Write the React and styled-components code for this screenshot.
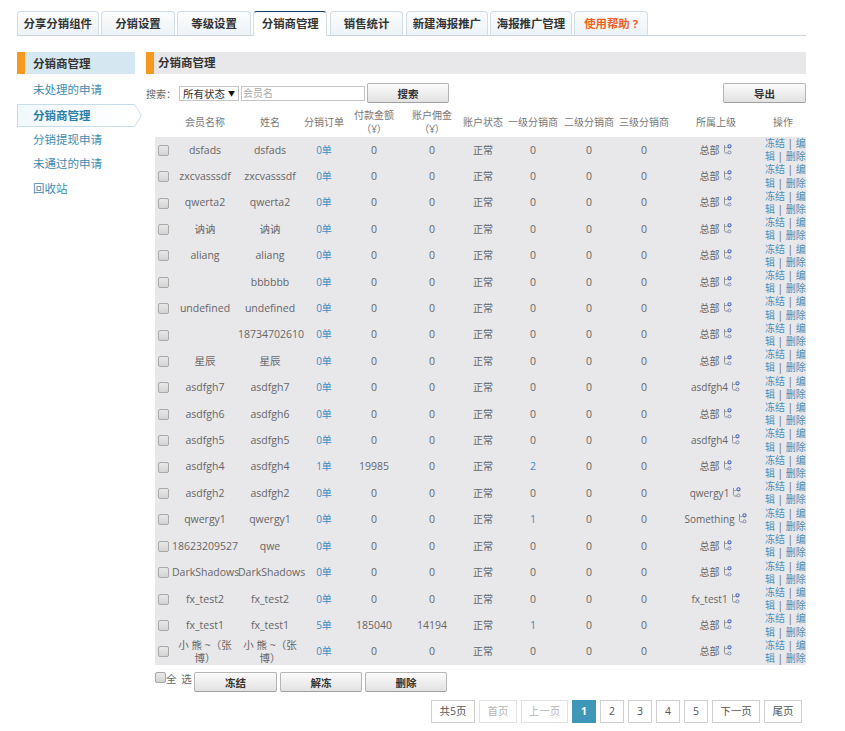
import styled, { createGlobalStyle } from 'styled-components';

const FONT = '"Open Sans", "Noto Sans CJK SC", sans-serif';

const tabs = ['分享分销组件', '分销设置', '等级设置', '分销商管理', '销售统计', '新建海报推广', '海报推广管理', '使用帮助 ?'];
const tabWidths = [81.5, 73.3, 73.3, 73.5, 73.5, 81.5, 81.2, 73.5];
const sideLinks = ['未处理的申请', '分销商管理', '分销提现申请', '未通过的申请', '回收站'];
const columns = ['会员名称', '姓名', '分销订单', '付款金额（¥）', '账户佣金（¥）', '账户状态', '一级分销商', '二级分销商', '三级分销商', '所属上级', '操作'];
const colWidths = [17, 66, 64, 44, 56, 60, 42, 58, 54, 56, 88, 46];

const rows = [
  ['dsfads', 'dsfads'],
  ['zxcvasssdf', 'zxcvasssdf'],
  ['qwerta2', 'qwerta2'],
  ['讷讷', '讷讷'],
  ['aliang', 'aliang'],
  ['', 'bbbbbb'],
  ['undefined', 'undefined'],
  ['', '18734702610'],
  ['星辰', '星辰'],
  ['asdfgh7', 'asdfgh7', { parent: 'asdfgh4' }],
  ['asdfgh6', 'asdfgh6'],
  ['asdfgh5', 'asdfgh5', { parent: 'asdfgh4' }],
  ['asdfgh4', 'asdfgh4', { orders: 1, paid: 19985, level1: 2 }],
  ['asdfgh2', 'asdfgh2', { parent: 'qwergy1' }],
  ['qwergy1', 'qwergy1', { parent: 'Something', level1: 1 }],
  ['18623209527', 'qwe'],
  ['DarkShadows', 'DarkShadows'],
  ['fx_test2', 'fx_test2', { parent: 'fx_test1' }],
  ['fx_test1', 'fx_test1', { orders: 5, paid: 185040, commission: 14194, level1: 1 }],
  ['小 熊 ~（张博）', '小 熊 ~（张博）'],
];

const pages = ['1', '2', '3', '4', '5'];

const GlobalStyle = createGlobalStyle`
  html, body {
    margin: 0;
    background: #fff;
    font-family: ${FONT};
    font-size: 10px;
    color: #666;
  }
`;

const Page = styled.div`
  width: 789px;
  padding: 11px 0 0 17px;
`;

const TabBar = styled.div`
  display: flex;
  gap: 2.8px;
  height: 24px;
  border-bottom: 1px solid #c9d5de;
`;

const Tab = styled.div`
  box-sizing: border-box;
  flex: none;
  height: ${(p) => (p.$active ? 25 : 24)}px;
  line-height: 23px;
  text-align: center;
  font-size: 11.4px;
  font-weight: 700;
  white-space: nowrap;
  color: ${(p) => (p.$help ? '#f0621e' : '#333')};
  background: ${(p) => (p.$active ? '#fff' : 'linear-gradient(#fbfcfd, #edf3f8)')};
  border: 1px solid #d2dde6;
  border-top-color: ${(p) => (p.$active ? '#1d3f5f' : '#d2dde6')};
  border-bottom: none;
  border-radius: 4px 4px 0 0;
`;

const Body = styled.div`
  display: flex;
  margin-top: 16px;
`;

const Sidebar = styled.aside`
  flex: none;
  width: 118px;
  margin-right: 11px;
`;

const SideHead = styled.div`
  height: 22px;
  line-height: 23px;
  padding-left: 8px;
  font-size: 11.5px;
  font-weight: 700;
  color: #333;
  background: #d5e7f0;
  border-left: 8px solid #f7981f;
`;

const SideList = styled.div`
  display: flex;
  flex-direction: column;
  margin-top: 4px;
`;

const SideLink = styled.div`
  position: relative;
  box-sizing: border-box;
  height: 24.7px;
  line-height: 24px;
  padding-left: 16px;
  font-size: 11.5px;
  color: ${(p) => (p.$active ? '#2a7fa6' : '#3f8bb0')};
  font-weight: ${(p) => (p.$active ? 700 : 400)};
  ${(p) =>
    p.$active &&
    `
    height: 23px;
    margin: 1px 0;
    padding-left: 15px;
    line-height: 22px;
    background: linear-gradient(90deg, #f1f8fc, #fff);
    border: 1px solid #c7dde9;
    border-right: none;
    &::after {
      content: '';
      position: absolute;
      right: -8px;
      top: 2px;
      width: 16px;
      height: 16px;
      background: #fff;
      border-top: 1px solid #c7dde9;
      border-right: 1px solid #c7dde9;
      transform: scaleX(0.6) rotate(45deg);
    }
  `}
`;

const Main = styled.main`
  flex: none;
  width: 660px;
`;

const MainHead = styled.div`
  height: 22px;
  line-height: 22px;
  padding-left: 4px;
  font-size: 11.5px;
  font-weight: 700;
  color: #333;
  background: #e8e7ea;
  border-left: 8px solid #f7981f;
`;

const SearchBar = styled.div`
  display: flex;
  align-items: center;
  height: 20px;
  margin-top: 9px;
`;

const SearchLabel = styled.span`
  width: 33px;
  flex: none;
  font-size: 10px;
  color: #666;
`;

const StatusSelect = styled.div`
  box-sizing: border-box;
  display: flex;
  justify-content: space-between;
  align-items: center;
  width: 60px;
  height: 15px;
  padding: 0 3px;
  font-size: 10.5px;
  color: #333;
  border: 1px solid #c4c4c4;
`;

const SelectArrow = styled.span`
  font-size: 7px;
  color: #111;
`;

const NameInput = styled.input`
  box-sizing: border-box;
  width: 124px;
  height: 15px;
  margin-left: 2px;
  padding: 0 1px;
  font-family: ${FONT};
  font-size: 10px;
  border: 1px solid #c4c4c4;
  outline: none;
  &::placeholder {
    color: #aaa;
  }
`;

const Button = styled.button`
  box-sizing: border-box;
  width: ${(p) => p.$w || 82}px;
  height: 20px;
  padding: 0;
  margin-left: ${(p) => p.$ml || 0}px;
  font-family: ${FONT};
  font-size: 10.5px;
  font-weight: 600;
  color: #333;
  background: linear-gradient(#fbfbfb, #e2e2e2);
  border: 1px solid #b5b5b5;
  border-bottom-color: #9f9f9f;
  border-radius: 2px;
`;

const Spacer = styled.div`
  flex: 1;
`;

const Table = styled.table`
  width: 651px;
  margin: 5px 0 0 9px;
  border-collapse: collapse;
  table-layout: fixed;
  text-align: center;
  font-size: 10px;
`;

const Th = styled.th`
  height: 29px;
  padding: 0;
  font-weight: 400;
  line-height: 13.5px;
  color: #777;
  vertical-align: middle;
`;

const Tr = styled.tr`
  background: #e8e7ea;
  height: 26.4px;
`;

const Td = styled.td`
  padding: 0;
  font-size: ${(p) => (p.$latin ? 10.5 : 10)}px;
  line-height: 13.2px;
  color: #666;
  white-space: ${(p) => (p.$nowrap ? 'nowrap' : 'normal')};
`;

const ActionCell = styled.td`
  padding: 0 0 0 5px;
  line-height: 13.2px;
  font-size: 10px;
  color: #666;
  text-align: left;
  word-break: break-all;
`;

const Link = styled.a`
  color: ${(p) => (p.$strong ? '#3a8cc0' : '#4a8fb8')};
`;

const Check = styled.span`
  display: ${(p) => (p.$inline ? 'inline-block' : 'block')};
  box-sizing: border-box;
  width: 11px;
  height: 11px;
  margin-left: ${(p) => (p.$inline ? 0 : 3)}px;
  background: linear-gradient(#e8e8e8, #d4d4d4);
  border: 1px solid #a8a8a8;
  border-radius: 2px;
`;

const Parent = styled.span`
  display: inline-flex;
  align-items: flex-start;
  gap: 3px;
`;

const Footer = styled.div`
  display: flex;
  align-items: flex-start;
  height: 28px;
  margin: 7px 0 0 9px;
`;

const SelectAll = styled.label`
  display: flex;
  width: 39px;
  flex: none;
  font-size: 10.5px;
  letter-spacing: 1px;
  line-height: 14px;
  color: #666;
`;

const Pager = styled.div`
  display: flex;
  justify-content: flex-end;
  gap: 4px;
  padding-right: 4px;
`;

const PageItem = styled.span`
  box-sizing: border-box;
  width: ${(p) => p.$w || 24}px;
  height: 23px;
  line-height: 21px;
  text-align: center;
  font-size: 10.5px;
  color: ${(p) => (p.$on ? '#fff' : p.$off ? '#b5b5b5' : '#555')};
  font-weight: ${(p) => (p.$on ? 700 : 400)};
  background: ${(p) => (p.$on ? '#3f97b8' : '#fff')};
  border: 1px solid ${(p) => (p.$on ? '#3f97b8' : p.$off ? '#e2e2e2' : '#cfcfcf')};
`;

const TreeIcon = () => (
  <svg width="10" height="11" viewBox="0 0 10 11" fill="none">
    <path d="M1.5 1v6.5c0 1 .5 1.5 1.5 1.5h2" stroke="#8a8a8a" strokeWidth="0.9" />
    <path d="M1.5 3.5h3" stroke="#8a8a8a" strokeWidth="0.7" />
    <circle cx="6.5" cy="2.3" r="1.6" stroke="#4668c0" strokeWidth="1.1" />
    <circle cx="6.5" cy="8.4" r="1.5" stroke="#7f8fb8" strokeWidth="1" />
  </svg>
);

const App = () => (
  <>
    <GlobalStyle />
    <Page>
      <TabBar>
        {tabs.map((t, i) => (
          <Tab key={t} $active={i === 3} $help={i === 7} style={{ width: tabWidths[i] }}>
            {t}
          </Tab>
        ))}
      </TabBar>
      <Body>
        <Sidebar>
          <SideHead>分销商管理</SideHead>
          <SideList>
            {sideLinks.map((l, i) => (
              <SideLink key={l} $active={i === 1}>
                {l}
              </SideLink>
            ))}
          </SideList>
        </Sidebar>
        <Main>
          <MainHead>分销商管理</MainHead>
          <SearchBar>
            <SearchLabel>搜索：</SearchLabel>
            <StatusSelect>
              所有状态<SelectArrow>▼</SelectArrow>
            </StatusSelect>
            <NameInput placeholder="会员名" />
            <Button $ml={2}>搜索</Button>
            <Spacer />
            <Button $w={83}>导出</Button>
          </SearchBar>
          <Table>
            <colgroup>
              {colWidths.map((w, i) => (
                <col key={i} style={{ width: w }} />
              ))}
            </colgroup>
            <thead>
              <tr>
                <Th />
                {columns.map((c) => (
                  <Th key={c}>{c}</Th>
                ))}
              </tr>
            </thead>
            <tbody>
              {rows.map(([name, real, extra = {}], i) => (
                <Tr key={i}>
                  <Td>
                    <Check />
                  </Td>
                  <Td $latin $nowrap={i !== 19}>{name}</Td>
                  <Td $latin $nowrap={i !== 19}>{real}</Td>
                  <Td>
                    <Link $strong>{extra.orders || 0}单</Link>
                  </Td>
                  <Td $latin>{extra.paid || 0}</Td>
                  <Td $latin>{extra.commission || 0}</Td>
                  <Td>正常</Td>
                  <Td $latin>{extra.level1 ? <Link $strong>{extra.level1}</Link> : 0}</Td>
                  <Td $latin>0</Td>
                  <Td $latin>0</Td>
                  <Td $nowrap>
                    <Parent>
                      {extra.parent || '总部'}
                      <TreeIcon />
                    </Parent>
                  </Td>
                  <ActionCell>
                    <Link>冻结</Link> | <Link>编辑</Link> | <Link>删除</Link>
                  </ActionCell>
                </Tr>
              ))}
            </tbody>
          </Table>
          <Footer>
            <SelectAll>
              <Check $inline />全 选
            </SelectAll>
            <Button $w={83}>冻结</Button>
            <Button $ml={3}>解冻</Button>
            <Button $ml={3}>删除</Button>
          </Footer>
          <Pager>
            <PageItem $w={44}>共5页</PageItem>
            <PageItem $w={38} $off>首页</PageItem>
            <PageItem $w={47} $off>上一页</PageItem>
            {pages.map((p, i) => (
              <PageItem key={p} $on={i === 0}>
                {p}
              </PageItem>
            ))}
            <PageItem $w={48}>下一页</PageItem>
            <PageItem $w={38}>尾页</PageItem>
          </Pager>
        </Main>
      </Body>
    </Page>
  </>
);

export default App;
